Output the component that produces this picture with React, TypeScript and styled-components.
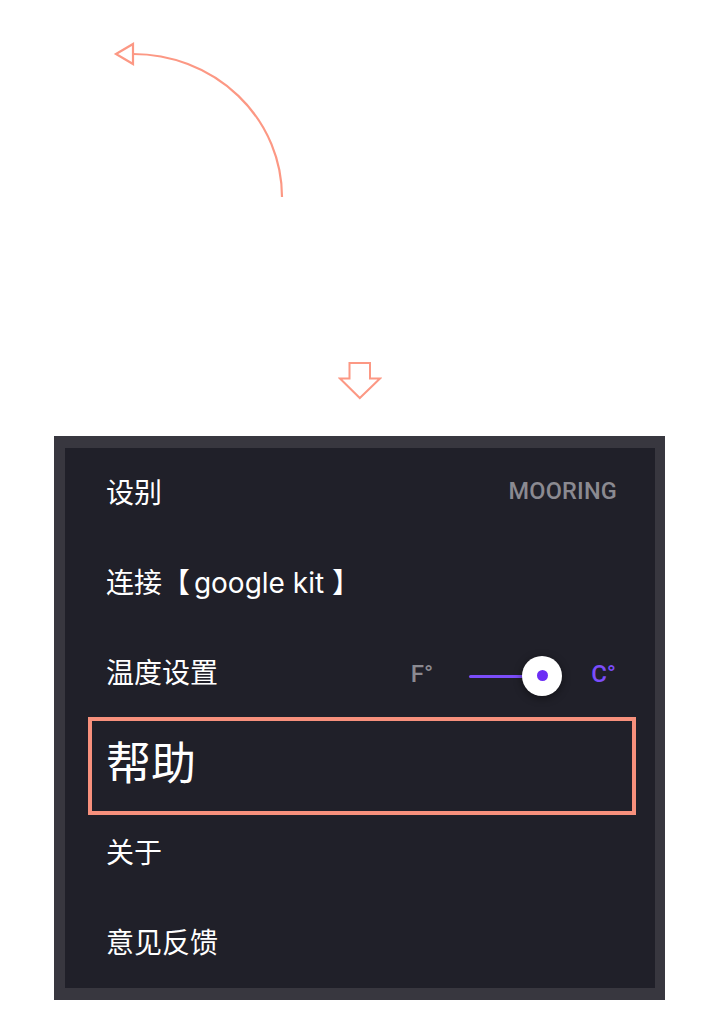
import React from 'react';
import styled, { createGlobalStyle } from 'styled-components';

const GlobalStyle = createGlobalStyle`
    html, body {
        margin: 0;
        padding: 0;
        background: #ffffff;
    }
    body {
        font-family: 'Inter', 'Noto Sans CJK SC', sans-serif;
    }
`;

const Page = styled.div`
    width: 720px;
    height: 1032px;
    background: #ffffff;
    display: flex;
    flex-direction: column;
`;

const CurveArrow = styled.svg`
    display: block;
    margin: 40px 0 0 112px;
`;

const DownArrow = styled.svg`
    display: block;
    margin: 160px 0 0 338px;
`;

const Frame = styled.div`
    margin: 36px 0 0 54px;
    width: 611px;
    box-sizing: border-box;
    padding: 12px 10px 12px 11px;
    background: #38373f;
`;

const Panel = styled.div`
    background: #202029;
    display: flex;
    flex-direction: column;
`;

const Row = styled.div`
    height: 90px;
    box-sizing: border-box;
    display: flex;
    align-items: center;
    justify-content: space-between;
    padding: 0 38px 4px 41px;
`;

const HelpBox = styled.div`
    height: 98px;
    box-sizing: border-box;
    margin: -1px 19px -7px 23px;
    border: 4px solid #f7907c;
    display: flex;
    align-items: center;
    padding: 0 0 11px 14px;
`;

const Label = styled.span<{ big?: boolean }>`
    color: #ffffff;
    font-size: ${(p) => (p.big ? '45px' : '28px')};
    font-weight: 400;
    font-family: 'Inter', 'Noto Sans CJK SC', sans-serif;
    white-space: pre;
`;

const Bracket = styled.span`
    font-family: 'Noto Sans CJK TC', sans-serif;
    letter-spacing: -4px;
`;

const Value = styled.span`
    color: #8b8a91;
    font-family: 'Roboto', sans-serif;
    font-weight: 500;
    font-size: 23.5px;
    letter-spacing: 0.2px;
`;

const Unit = styled.span<{ active?: boolean }>`
    color: ${(p) => (p.active ? '#7b4dfa' : '#8b8a91')};
    font-family: 'Roboto', sans-serif;
    font-weight: 500;
    font-size: 24px;
`;

const ToggleGroup = styled.div`
    display: flex;
    align-items: center;
    margin-right: 1px;
    padding-top: 5px;
`;

const Switch = styled.div`
    position: relative;
    width: 93px;
    height: 40px;
    margin: 4px 29px 0 36px;
`;

const Track = styled.div`
    position: absolute;
    left: 0;
    top: 19px;
    width: 62px;
    height: 3px;
    border-radius: 2px;
    background: #7b4dfa;
`;

const Thumb = styled.div`
    position: absolute;
    right: 0;
    top: 0;
    width: 40px;
    height: 40px;
    border-radius: 50%;
    background: #ffffff;
    box-shadow: 0 2px 8px rgba(0, 0, 0, 0.45);
    display: flex;
    align-items: center;
    justify-content: center;
`;

const Dot = styled.div`
    width: 11px;
    height: 11px;
    border-radius: 50%;
    background: #6c2ef5;
`;

const App: React.FC = () => {
    return (
        <Page>
            <GlobalStyle />
            {/* curved arrow pointing back up-left */}
            <CurveArrow width="174" height="160" viewBox="112 40 174 160">
                <path d="M133 54 A 149 143 0 0 1 282 197" fill="none" stroke="#fc9884" strokeWidth="2.2" />
                <path d="M116 54 L133 44 L133 64 Z" fill="#ffffff" stroke="#fc9884" strokeWidth="2.2" strokeLinejoin="miter" />
            </CurveArrow>
            <DownArrow width="44" height="40" viewBox="338 360 44 40">
                <path
                    d="M349.5 363 H370 V378.5 H380 L359.8 398 L340 378.5 H349.5 Z"
                    fill="#ffffff"
                    stroke="#fc9884"
                    strokeWidth="2"
                />
            </DownArrow>
            <Frame>
                <Panel>
                    <Row>
                        <Label>设别</Label>
                        <Value>MOORING</Value>
                    </Row>
                    <Row>
                        <Label>
                            连接<Bracket>【</Bracket> google kit <Bracket>】</Bracket>
                        </Label>
                    </Row>
                    <Row>
                        <Label>温度设置</Label>
                        <ToggleGroup>
                            <Unit>F°</Unit>
                            <Switch>
                                <Track />
                                <Thumb>
                                    <Dot />
                                </Thumb>
                            </Switch>
                            <Unit active>C°</Unit>
                        </ToggleGroup>
                    </Row>
                    <HelpBox>
                        <Label big>帮助</Label>
                    </HelpBox>
                    <Row>
                        <Label>关于</Label>
                    </Row>
                    <Row>
                        <Label>意见反馈</Label>
                    </Row>
                </Panel>
            </Frame>
        </Page>
    );
};

export default App;
